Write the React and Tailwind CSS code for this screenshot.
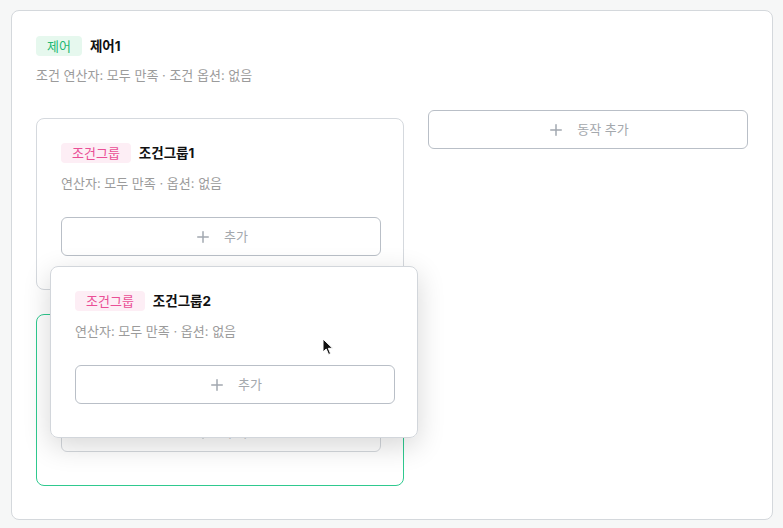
import { Plus } from 'lucide-react'

const FONT = { fontFamily: 'Inter, "Noto Sans CJK KR", sans-serif' }

function Badge({ tone, children }) {
  const cls = tone === 'green'
    ? 'bg-[#e6f8ee] text-[#22b872]'
    : 'bg-[#fdeef5] text-[#ea4f96]'
  return <span className={`inline-flex h-5 items-center rounded px-[11px] text-[13px] leading-none ${cls}`}>{children}</span>
}

function AddButton({ label, className = '' }) {
  return (
    <button className={`flex h-[39px] w-full items-center justify-center gap-3 rounded-md border border-[#b9bfc7] bg-white text-[13px] text-[#a4a8ad] ${className}`}>
      <Plus size={18} strokeWidth={2} className="text-[#a2a8b0]" />
      <span>{label}</span>
    </button>
  )
}

function GroupCard({ name, className = '', inner = '' }) {
  return (
    <div className={`rounded-lg border bg-white pl-6 pr-[22px] pt-6 pb-[33px] ${className}`}>
      <div className={inner}>
        <div className="flex h-5 items-center gap-2">
          <Badge tone="pink">조건그룹</Badge>
          <span className="text-[13.5px] leading-5 font-bold text-[#111]">{name}</span>
        </div>
        <p className="mt-2.5 text-[13px] leading-5 text-[#9b9b9b]">연산자: 모두 만족 · 옵션: 없음</p>
        <AddButton label="추가" className="mt-6" />
      </div>
    </div>
  )
}

export default function App() {
  return (
    <div className="h-[528px] w-[783px] bg-[#f6f7f7] pt-2.5 pl-[11px]" style={FONT}>
      <div className="h-[510px] w-[762px] rounded-lg border border-[#d4d8dc] bg-white px-6 pt-[25px]">
        <div className="flex h-5 items-center gap-2">
          <Badge tone="green">제어</Badge>
          <span className="text-[13.5px] leading-5 font-bold text-[#111]">제어1</span>
        </div>
        <p className="mt-[9px] text-[13px] leading-5 text-[#9b9b9b]">조건 연산자: 모두 만족 · 조건 옵션: 없음</p>

        <div className="mt-[25px] flex gap-[24px]">
          <div className="relative mt-2 flex w-[368px] flex-col gap-[24px]">
            <GroupCard name="조건그룹1" className="border-[#d5d9de]" />
            <GroupCard name="조건그룹2" className="border-[#2fc98f]" inner="opacity-60" />

            <div className="absolute left-[14px] top-[148px] w-[368px] rounded-lg shadow-[0_8px_28px_rgba(0,0,0,0.16)]">
              <GroupCard name="조건그룹2" className="border-[#d2d6db]" />
            </div>

            <svg className="absolute left-[286px] top-[220px]" width="12" height="18" viewBox="0 0 12 18">
              <path d="M1 1 L1 14 L4.2 11 L6.6 16.5 L8.6 15.6 L6.3 10.3 L10.6 10.3 Z" fill="#111" stroke="#fff" strokeWidth="1" />
            </svg>
          </div>

          <div className="w-[320px]">
            <AddButton label="동작 추가" />
          </div>
        </div>
      </div>
    </div>
  )
}
